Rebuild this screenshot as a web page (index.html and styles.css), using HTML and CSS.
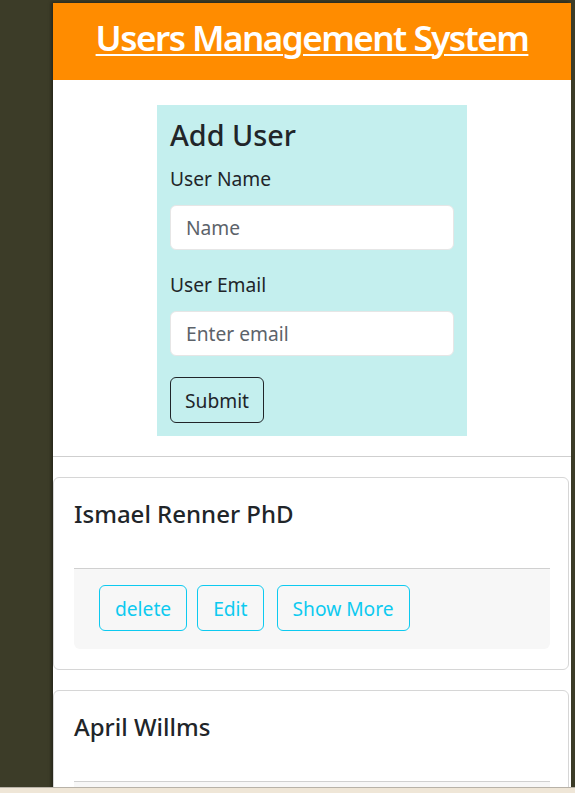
FILE: index.html
```html
<!DOCTYPE html>
<html lang="en">
<head>
<meta charset="utf-8">
<title>Users Management System</title>
<link rel="stylesheet" href="styles.css">
</head>
<body>
<div class="window">
  <header class="topbar">
    <h1 class="title"><a href="#">Users Management System</a></h1>
  </header>
  <div class="form-wrap">
    <form class="add-form">
      <h4 class="form-title">Add User</h4>
      <div class="field">
        <label class="label">User Name</label>
        <input class="input" type="text" placeholder="Name">
      </div>
      <div class="field">
        <label class="label">User Email</label>
        <input class="input" type="email" placeholder="Enter email">
      </div>
      <button class="btn-submit" type="button">Submit</button>
    </form>
  </div>
  <hr class="divider">
  <div class="card">
    <h5 class="card-title">Ismael Renner PhD</h5>
    <div class="card-footer">
      <button class="btn-info btn-delete" type="button">delete</button>
      <button class="btn-info btn-edit" type="button">Edit</button>
      <button class="btn-info" type="button">Show More</button>
    </div>
  </div>
  <div class="card">
    <h5 class="card-title">April Willms</h5>
    <div class="card-footer card-footer-empty"></div>
  </div>
</div>
<div class="taskbar"></div>
</body>
</html>
```
FILE: styles.css
```css
html, body {
  margin: 0;
  padding: 0;
}
body {
  background: #3c3c28;
  height: 793px;
  overflow: hidden;
  font-family: "Noto Sans", "Open Sans", sans-serif;
  color: #212529;
  font-size: 19.2px;
}
.window {
  margin: 3px 0 0 53px;
  width: 518px;
  height: 790px;
  background: #fff;
  box-shadow: -2px -1px 3px rgba(0,0,0,0.35);
  overflow: hidden;
}
.topbar {
  background: #ff8c00;
  height: 77px;
  display: flex;
  justify-content: center;
  align-items: flex-start;
}
.title {
  margin: 0;
  padding-top: 14px;
  font-size: 35px;
  font-weight: 600;
  letter-spacing: -1.5px;
  line-height: 1.2;
}
.title a {
  color: #fff;
  text-decoration: underline;
  text-decoration-thickness: 2px;
  text-underline-offset: 3px;
}
.form-wrap {
  display: flex;
  justify-content: center;
  padding-top: 25px;
}
.add-form {
  width: 284px;
  background: #c4efee;
  padding: 13px;
}
.form-title {
  margin: 0 0 12px;
  font-size: 28.8px;
  font-weight: 500;
  line-height: 1.2;
}
.field {
  margin-bottom: 21px;
}
.label {
  display: block;
  line-height: 28.8px;
  margin-bottom: 11.5px;
}
.input {
  display: block;
  box-sizing: border-box;
  width: 100%;
  height: 45px;
  border: 1px solid #e6e6e6;
  border-radius: 6px;
  padding: 0 15px;
  font: inherit;
  color: #212529;
  background: #fff;
  outline: none;
}
.input::placeholder {
  color: #5c636a;
}
.btn-submit {
  box-sizing: border-box;
  height: 46px;
  padding: 0 14px;
  font: inherit;
  color: #212529;
  background: transparent;
  border: 1px solid #212529;
  border-radius: 6px;
}
.divider {
  margin: 20px 0 0;
  border: 0;
  border-top: 1px solid #cfcfcf;
}
.card {
  margin: 20px 2px 0 0;
  border: 1px solid #d6d6d6;
  border-radius: 6px;
  padding: 20px 18px 20px 20px;
}
.card-title {
  margin: 0;
  font-size: 24px;
  font-weight: 500;
  line-height: 1.2;
  padding-top: 2px;
  height: 68px;
}
.card-footer {
  background: #f7f7f7;
  border-top: 1px solid #d0d0d0;
  border-radius: 0 0 6px 6px;
  padding: 16px 25px 18px;
  display: flex;
}
.card-footer-empty {
  height: 46px;
}
.btn-info {
  box-sizing: border-box;
  height: 46px;
  padding: 0 15px;
  font: inherit;
  color: #0dcaf0;
  background: transparent;
  border: 1px solid #0dcaf0;
  border-radius: 6px;
}
.btn-delete { margin-right: 10px; }
.btn-edit { margin-right: 13px; }
.taskbar {
  position: fixed;
  left: 0;
  right: 0;
  bottom: 0;
  height: 5px;
  background: #efe6d7;
  border-top: 1px solid #b8b2a8;
}
```
